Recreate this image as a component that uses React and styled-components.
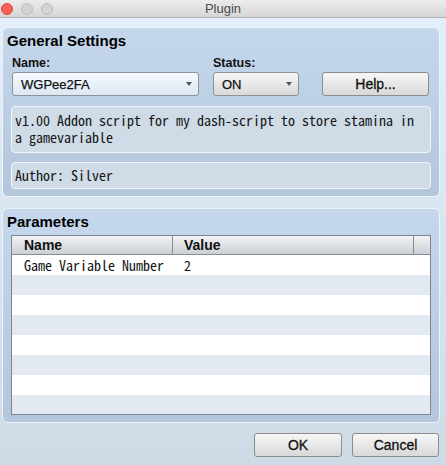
import React from "react";
import styled, { createGlobalStyle } from "styled-components";

const GlobalStyle = createGlobalStyle`
  html, body { margin: 0; padding: 0; }
  body {
    width: 446px;
    height: 465px;
    overflow: hidden;
    background: #d8e4f1;
    font-family: "Liberation Sans", Arial, sans-serif;
    color: #111;
  }
  * { box-sizing: border-box; }
`;

const Window = styled.div`
  width: 446px;
  height: 465px;
  display: flex;
  flex-direction: column;
  background: linear-gradient(#e4effc, #cfdae7);
`;

const TitleBar = styled.div`
  height: 18px;
  flex: none;
  display: grid;
  grid-template-columns: 1fr auto 1fr;
  align-items: center;
  background: linear-gradient(#ececec, #d6d6d6);
  border-bottom: 1px solid #b2b2b2;
`;

const Lights = styled.div`
  display: flex;
  gap: 8px;
  padding-left: 1px;
  align-items: center;
`;

const Light = styled.span`
  width: 12px;
  height: 12px;
  border-radius: 50%;
  background: ${(p) => (p.$red ? "#fc5f58" : "#d3d3d3")};
  border: 1px solid ${(p) => (p.$red ? "#de463f" : "#bdbdbd")};
`;

const WindowTitle = styled.div`
  font-size: 13px;
  color: #4b4b4b;
  line-height: 17px;
`;

const Content = styled.div`
  flex: 1;
  display: flex;
  flex-direction: column;
  padding: 9px 6px 0 2px;
`;

const Group = styled.section`
  border: 1px solid #edf3fb;
  border-radius: 6px;
  background: linear-gradient(#c5d7ec, #b3c6db);
  padding: 4px 8px 7px 8px;
  display: flex;
  flex-direction: column;
  margin-top: ${(p) => p.$mt || 0}px;
`;

const GroupTitle = styled.h2`
  margin: 0 0 ${(p) => p.$gap}px -4px;
  font-size: 15px;
  line-height: 18px;
  font-weight: bold;
  color: #000;
`;

const FieldRow = styled.div`
  display: grid;
  grid-template-columns: 201px 109px 107px;
  padding-left: 1px;
  align-items: end;
`;

const Field = styled.div`
  display: flex;
  flex-direction: column;
  gap: 2px;
`;

const Label = styled.label`
  font-size: 12.5px;
  line-height: 14px;
  font-weight: bold;
  color: #111;
`;

const Combo = styled.div`
  width: ${(p) => p.$w}px;
  height: 24px;
  display: flex;
  align-items: center;
  justify-content: space-between;
  padding: 0 6px 0 8px;
  border: 1px solid #8c9298;
  border-radius: 3px;
  background: ${(p) =>
    p.$light
      ? "linear-gradient(#f5f9fe, #dde7f2)"
      : "linear-gradient(#f7f7f7, #d9d9d9)"};
  font-size: 13px;
  color: #111;
  -webkit-text-stroke: 0.25px #111;
`;

const Arrow = styled.span`
  width: 0;
  height: 0;
  border-left: 3.5px solid transparent;
  border-right: 3.5px solid transparent;
  border-top: 4px solid #555;
`;

const Button = styled.button`
  width: ${(p) => p.$w}px;
  height: 24px;
  padding: 0;
  border: 1px solid #8c8c8c;
  border-radius: 3px;
  background: linear-gradient(#f7f7f7, #d8d8d8);
  font-family: "Liberation Sans", Arial, sans-serif;
  font-size: 14px;
  color: #111;
  -webkit-text-stroke: 0.3px #111;
`;

const InfoBox = styled.div`
  margin-top: ${(p) => p.$mt}px;
  border: 1px solid #f0f5fb;
  border-radius: 4px;
  background: #cfdbe7;
  padding: ${(p) => p.$pt}px 3px ${(p) => p.$pb}px 3px;
  font-family: "Noto Sans Mono CJK JP", "DejaVu Sans Mono", monospace;
  font-size: 14px;
  line-height: 17px;
  color: #151515;
  white-space: pre-wrap;
`;

const Table = styled.div`
  border: 1px solid #7e868f;
  background: #fff;
  display: flex;
  flex-direction: column;
`;

const Header = styled.div`
  display: grid;
  grid-template-columns: 161px 241px 17px;
  height: 19px;
  border-bottom: 1px solid #868c94;
  background: linear-gradient(#f2f3f5, #cbd0d6);
`;

const HeadCell = styled.div`
  padding-left: ${(p) => p.$pl}px;
  border-right: ${(p) => (p.$last ? "none" : "1px solid #868c94")};
  font-size: 14px;
  line-height: 18px;
  font-weight: bold;
  color: #111;
`;

const Body = styled.div`
  height: 159px;
  overflow: hidden;
`;

const Row = styled.div`
  display: grid;
  grid-template-columns: 161px 1fr;
  height: 20px;
  background: ${(p) => (p.$alt ? "#e3e9f0" : "#ffffff")};
  font-family: "Noto Sans Mono CJK JP", "DejaVu Sans Mono", monospace;
  font-size: 14px;
  line-height: 20px;
  color: #111;
`;

const Cell = styled.div`
  padding-left: ${(p) => p.$pl}px;
  white-space: nowrap;
`;

const ButtonRow = styled.div`
  display: flex;
  justify-content: flex-end;
  gap: 10px;
  margin-top: 10px;
  padding-right: 1px;
`;

const rows = [
  { name: "Game Variable Number", value: "2" },
  {}, {}, {}, {}, {}, {}, {},
];

export default function App() {
  return (
    <>
      <GlobalStyle />
      <Window>
        <TitleBar>
          <Lights>
            <Light $red />
            <Light />
            <Light />
          </Lights>
          <WindowTitle>Plugin</WindowTitle>
          <div />
        </TitleBar>
        <Content>
          <Group>
            <GroupTitle $gap={6}>General Settings</GroupTitle>
            <FieldRow>
              <Field>
                <Label>Name:</Label>
                <Combo $w={187} $light>
                  <span>WGPee2FA</span>
                  <Arrow />
                </Combo>
              </Field>
              <Field>
                <Label>Status:</Label>
                <Combo $w={86}>
                  <span>ON</span>
                  <Arrow />
                </Combo>
              </Field>
              <Button $w={107}>Help...</Button>
            </FieldRow>
            <InfoBox $mt={10} $pt={5} $pb={6}>
              {"v1.00 Addon script for my dash-script to store stamina in\na gamevariable"}
            </InfoBox>
            <InfoBox $mt={9} $pt={4} $pb={4}>
              Author: Silver
            </InfoBox>
          </Group>
          <Group $mt={11}>
            <GroupTitle $gap={4}>Parameters</GroupTitle>
            <Table>
              <Header>
                <HeadCell $pl={12}>Name</HeadCell>
                <HeadCell $pl={11}>Value</HeadCell>
                <HeadCell $last />
              </Header>
              <Body>
                {rows.map((r, i) => (
                  <Row key={i} $alt={i % 2 === 1}>
                    <Cell $pl={12}>{r.name || ""}</Cell>
                    <Cell $pl={11}>{r.value || ""}</Cell>
                  </Row>
                ))}
              </Body>
            </Table>
          </Group>
          <ButtonRow>
            <Button $w={88}>OK</Button>
            <Button $w={87}>Cancel</Button>
          </ButtonRow>
        </Content>
      </Window>
    </>
  );
}
